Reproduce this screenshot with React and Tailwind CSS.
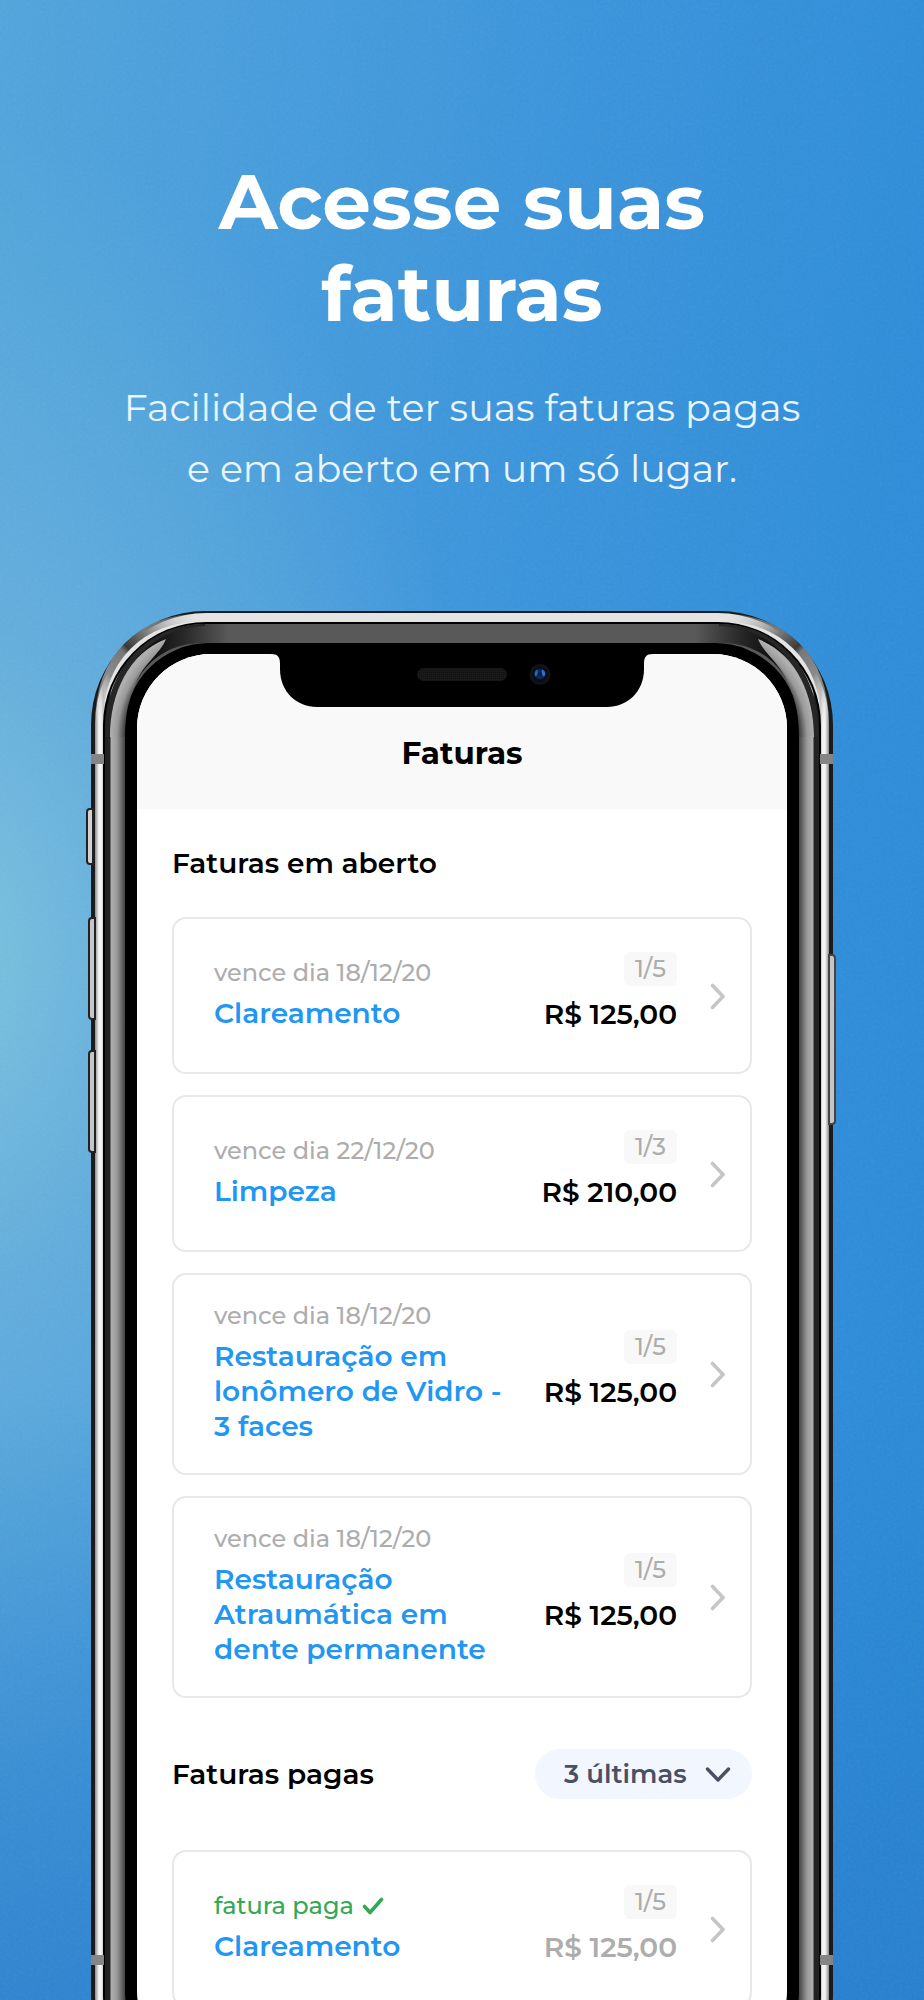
import React, { useState } from "react";

const openInvoices = [
  { id: 1, due: "vence dia 18/12/20", name: "Clareamento", part: "1/5", price: "R$ 125,00" },
  { id: 2, due: "vence dia 22/12/20", name: "Limpeza", part: "1/3", price: "R$ 210,00" },
  { id: 3, due: "vence dia 18/12/20", name: "Restauração em lonômero de Vidro - 3 faces", part: "1/5", price: "R$ 125,00" },
  { id: 4, due: "vence dia 18/12/20", name: "Restauração Atraumática em dente permanente", part: "1/5", price: "R$ 125,00" },
];

const paidInvoices = [
  { id: 5, paid: true, name: "Clareamento", part: "1/5", price: "R$ 125,00" },
];

function InvoiceCard({ invoice }) {
  return (
    <a
      href={`#fatura-${invoice.id}`}
      className="flex min-h-[157px] items-center rounded-[14px] border-2 border-[#e8e8e8] bg-white pr-6 pl-10"
    >
      <div className="flex flex-1 items-center justify-between pt-[21px] pb-[29px]">
        <div className="w-[300px]">
          {invoice.paid ? (
            <p className="mb-[3px] flex items-center gap-2 text-[24px] leading-10 font-medium text-[#34a853]">
              fatura paga
              <svg viewBox="0 0 22 18" className="h-[18px] w-[22px]" fill="none" stroke="currentColor" strokeWidth="3.6" strokeLinecap="round" strokeLinejoin="round">
                <path d="M2.5 9.5L8 15.5L19.5 2.5" />
              </svg>
            </p>
          ) : (
            <p className="mb-[3px] text-[24px] leading-10 font-medium text-[#adadad]">{invoice.due}</p>
          )}
          <p className="text-[28px] leading-[35px] font-semibold text-[#2196f3]">{invoice.name}</p>
        </div>

        <div className="flex flex-col items-end gap-[11px]">
          <span className="rounded-md bg-[#f8f8f8] px-[11px] text-[24px] leading-[34px] font-medium text-[#adadad]">
            {invoice.part}
          </span>
          <span className={`text-[28px] leading-[35px] font-semibold whitespace-nowrap ${invoice.paid ? "text-[#adadad]" : "text-black"}`}>
            {invoice.price}
          </span>
        </div>
      </div>

      <svg viewBox="0 0 16 30" className="ml-[33px] h-[30px] w-4" fill="none" stroke="#c6c6c6" strokeWidth="3.6" strokeLinecap="round" strokeLinejoin="round">
        <path d="M2.5 4.5L13 15.5L2.5 26.5" />
      </svg>
    </a>
  );
}

function Notch() {
  return (
    <svg viewBox="0 0 382 53" className="absolute top-0 left-1/2 h-[53px] w-[382px] -translate-x-1/2" aria-hidden="true">
      <defs>
        <radialGradient id="lens">
          <stop offset="0" stopColor="#06102c" />
          <stop offset="0.55" stopColor="#0e2f68" />
          <stop offset="1" stopColor="#07122c" />
        </radialGradient>
        <pattern id="mesh" width="2" height="2" patternUnits="userSpaceOnUse">
          <rect width="2" height="2" fill="#191919" />
          <rect width="1" height="1" fill="#111" />
        </pattern>
      </defs>
      <path d="M0 0C7 0 9 3 9 10V15C9 38 26 53 46 53H336C356 53 373 38 373 15V10C373 3 375 0 382 0Z" fill="#000" />
      <rect x="146" y="14" width="90" height="13" rx="6.5" fill="url(#mesh)" />
      <circle cx="269" cy="20.500" r="10.500" fill="#121317" />
      <circle cx="269" cy="20.500" r="7.500" fill="#0a0b0f" />
      <circle cx="269" cy="20" r="6" fill="url(#lens)" />
      <path d="M266.500 15.500C263.500 16.500 262.800 20 264.500 22.500C266.500 22 267 18 266.500 15.500Z" fill="#2a66b8" />
      <path d="M271 15.500C274.500 16.500 275 20 273 22.500C271 22 270.500 18 271 15.500Z" fill="#2f72cc" />
    </svg>
  );
}

// reflections where the metal bends round the top corners
function CornerShine({ id }) {
  return (
    <svg viewBox="0 0 140 140" className="h-[140px] w-[140px]" fill="none" aria-hidden="true">
      <defs>
        <linearGradient id={`${id}-steel`} x1="0" y1="110" x2="110" y2="0" gradientUnits="userSpaceOnUse">
          <stop offset="0" stopColor="#f4f4f4" stopOpacity="0" />
          <stop offset="0.3" stopColor="#8a8a8a" />
          <stop offset="0.46" stopColor="#777" />
          <stop offset="0.5" stopColor="#3a3a3a" />
          <stop offset="0.64" stopColor="#777" />
          <stop offset="1" stopColor="#efefef" stopOpacity="0" />
        </linearGradient>
        <linearGradient id={`${id}-rim`} x1="60" y1="0" x2="138" y2="0" gradientUnits="userSpaceOnUse">
          <stop offset="0" stopColor="#0c0c0c" />
          <stop offset="0.4" stopColor="#272727" />
          <stop offset="1" stopColor="#595959" />
        </linearGradient>
        <radialGradient id={`${id}-glow`} cx="134" cy="126" r="115" gradientUnits="userSpaceOnUse">
          <stop offset="0.87" stopColor="#3c3c3c" />
          <stop offset="0.94" stopColor="#999" />
          <stop offset="1" stopColor="#b0b0b0" />
        </radialGradient>
      </defs>
      <path d="M8 112C8 47 50 6.500 112 6.500" stroke={`url(#${id}-steel)`} strokeWidth="8" />
      <path d="M14 126V124C14 58 56 13 114 13H140V32H112C66 32 34 65 34 122V126Z" fill={`url(#${id}-rim)`} />
      <path d="M14 126V124C14 58 56 13 114 13V15C60 16 19 62 19 126Z" fill="#262626" />
      <path d="M19 126C19 82 38 42 75 28C69 43 53 52 45 72C37 90 34 105 34 126Z" fill={`url(#${id}-glow)`} />
    </svg>
  );
}

function PhoneFrame({ children }) {
  return (
    <div className="relative mx-auto w-full max-w-[742px]">
      {/* side keys */}
      <div className="absolute top-[197px] -left-[5px] h-[57px] w-2 rounded-l-sm border-2 border-[#222] bg-[#d2d2d2]" />
      <div className="absolute top-[306px] -left-[3px] h-[103px] w-2 rounded-l-sm border-2 border-[#222] bg-[#c6c6c6]" />
      <div className="absolute top-[439px] -left-[3px] h-[103px] w-2 rounded-l-sm border-2 border-[#222] bg-[#c6c6c6]" />
      <div className="absolute top-[343px] -right-[3px] h-[171px] w-2 rounded-r-sm border-2 border-[#444] bg-[#c6c6c6]" />

      <div className="rounded-[114px] bg-[#1b1b1b] px-1 py-[2px]">
        <div className="rounded-[111px] bg-[linear-gradient(90deg,#8c8c8c_0,#f6f6f6_4px,#efefef_7px,#bbb_8px,#e4e4e4_10px,#e4e4e4_calc(100%_-_10px),#bbb_calc(100%_-_8px),#efefef_calc(100%_-_7px),#f6f6f6_calc(100%_-_4px),#8c8c8c_100%)] px-2 py-[9px]">
          <div className="rounded-[103px] bg-black p-[2px]">
            <div className="rounded-[101px] bg-[linear-gradient(90deg,#222_0,#222_5px,#b0b0b0_6px,#999_12px,#444_20px,#595959_21px,#595959_calc(100%_-_21px),#444_calc(100%_-_20px),#999_calc(100%_-_12px),#b0b0b0_calc(100%_-_6px),#222_calc(100%_-_5px),#222_100%)] px-5 py-[19px]">
              <div className="rounded-[84px] bg-black px-3 py-[11px]">
                <div className="relative overflow-hidden rounded-[74px] bg-white">{children}</div>
              </div>
            </div>
          </div>
        </div>
      </div>

      <div className="pointer-events-none absolute inset-x-0 top-0 flex justify-between">
        <CornerShine id="left" />
        <div className="-scale-x-100">
          <CornerShine id="right" />
        </div>
      </div>

      {/* antenna bands */}
      <div className="absolute inset-x-0 top-[143px] flex justify-between">
        <span className="h-[10px] w-[13px] bg-[#858585]" />
        <span className="h-[10px] w-[13px] bg-[#858585]" />
      </div>
      <div className="absolute inset-x-0 bottom-[143px] flex justify-between">
        <span className="h-[10px] w-[13px] bg-[#858585]" />
        <span className="h-[10px] w-[13px] bg-[#858585]" />
      </div>
    </div>
  );
}

export default function App() {
  const [range, setRange] = useState("3");

  return (
    <main className="relative h-screen overflow-hidden bg-[linear-gradient(0deg,rgba(38,124,204,0.75)_0%,rgba(38,124,204,0)_30%),radial-gradient(ellipse_60%_42%_at_-6%_48%,#7cc4df_0%,rgba(110,180,222,0.65)_40%,rgba(80,160,220,0)_100%),linear-gradient(97deg,#50a5dc_0%,#3994dc_50%,#2789d8_100%)] font-[Montserrat,Inter,sans-serif]">
      <svg className="absolute inset-0 h-full w-full opacity-8" aria-hidden="true">
        <filter id="grain">
          <feTurbulence type="fractalNoise" baseFrequency="0.35" numOctaves="2" />
          <feColorMatrix type="saturate" values="0" />
        </filter>
        <rect width="100%" height="100%" filter="url(#grain)" />
      </svg>

      <div className="relative px-4">
        <header className="pt-[155px] pb-28 text-center text-white">
          <h1 className="text-[77px] leading-[92px] font-bold">
            Acesse suas
            <br />
            faturas
          </h1>
          <p className="mt-[38px] text-[38px] leading-[61px] text-[#e9f5ff]">
            Facilidade de ter suas faturas pagas
            <br />
            e em aberto em um só lugar.
          </p>
        </header>

        <PhoneFrame>
          <div className="bg-[#f9f9f9] pt-[78px] pb-[35px]">
            <h2 className="text-center text-[31px] leading-[42px] font-bold text-black">Faturas</h2>
          </div>
          <Notch />

          <div className="px-[35px] pb-[58px]">
            <h3 className="py-[35px] text-[28px] leading-[38px] font-semibold text-black">Faturas em aberto</h3>

            <div className="flex flex-col gap-[21px]">
              {openInvoices.map((invoice) => (
                <InvoiceCard key={invoice.id} invoice={invoice} />
              ))}
            </div>

            <div className="flex items-center justify-between py-[51px]">
              <h3 className="text-[28px] leading-[38px] font-semibold text-black">Faturas pagas</h3>
              <div className="relative">
                <select
                  aria-label="Faturas pagas"
                  value={range}
                  onChange={(e) => setRange(e.target.value)}
                  className="h-[50px] w-[217px] appearance-none rounded-full bg-[#f2f6ff] pl-[29px] text-[26px] font-semibold text-[#4a5064]"
                >
                  <option value="3">3 últimas</option>
                  <option value="6">6 últimas</option>
                </select>
                <svg viewBox="0 0 26 18" className="pointer-events-none absolute top-4 right-[21px] h-[18px] w-[26px]" fill="none" stroke="#4a5064" strokeWidth="3.4" strokeLinecap="round" strokeLinejoin="round">
                  <path d="M2.500 4L13 15L23.500 4" />
                </svg>
              </div>
            </div>

            <div className="flex flex-col gap-[21px]">
              {paidInvoices.map((invoice) => (
                <InvoiceCard key={invoice.id} invoice={invoice} />
              ))}
            </div>
          </div>
        </PhoneFrame>
      </div>
    </main>
  );
}
